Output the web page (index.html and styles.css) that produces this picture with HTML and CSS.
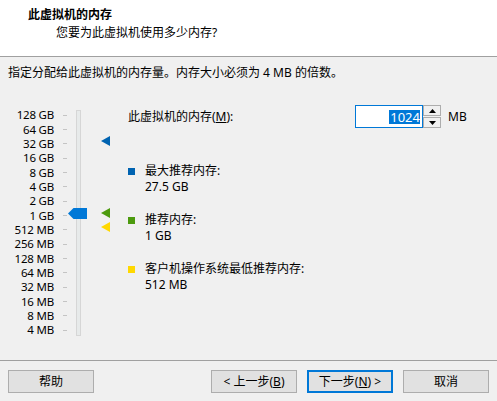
FILE: index.html
```html
<!DOCTYPE html>
<html lang="zh">
<head>
<meta charset="utf-8">
<title>此虚拟机的内存</title>
<link rel="stylesheet" href="styles.css">
</head>
<body>
<div class="page">
  <div class="header">
    <div class="title">此虚拟机的内存</div>
    <div class="subtitle">您要为此虚拟机使用多少内存?</div>
  </div>
  <div class="intro">指定分配给此虚拟机的内存量。内存大小必须为 4 MB 的倍数。</div>
  <div class="main">
    <div class="slider">
      <div class="scale">
        <div class="row"><span class="lab">128 GB</span><span class="tick"></span></div>
        <div class="row"><span class="lab">64 GB</span><span class="tick"></span></div>
        <div class="row"><span class="lab">32 GB</span><span class="tick"></span></div>
        <div class="row"><span class="lab">16 GB</span><span class="tick"></span></div>
        <div class="row"><span class="lab">8 GB</span><span class="tick"></span></div>
        <div class="row"><span class="lab">4 GB</span><span class="tick"></span></div>
        <div class="row"><span class="lab">2 GB</span><span class="tick"></span></div>
        <div class="row"><span class="lab">1 GB</span><span class="tick"></span></div>
        <div class="row"><span class="lab">512 MB</span><span class="tick"></span></div>
        <div class="row"><span class="lab">256 MB</span><span class="tick"></span></div>
        <div class="row"><span class="lab">128 MB</span><span class="tick"></span></div>
        <div class="row"><span class="lab">64 MB</span><span class="tick"></span></div>
        <div class="row"><span class="lab">32 MB</span><span class="tick"></span></div>
        <div class="row"><span class="lab">16 MB</span><span class="tick"></span></div>
        <div class="row"><span class="lab">8 MB</span><span class="tick"></span></div>
        <div class="row"><span class="lab">4 MB</span><span class="tick"></span></div>
      </div>
      <div class="track"></div>
      <svg class="thumb" style="top:102.5px" width="19" height="11" viewBox="0 0 19 11"><polygon points="0,5.5 5.5,0 19,0 19,11 5.5,11" fill="#0078d7"/></svg>
      <svg class="mark" style="top:31px" width="9" height="10" viewBox="0 0 9 10"><polygon points="0,5 9,0 9,10" fill="#0063b1"/></svg>
      <svg class="mark" style="top:102.5px" width="9" height="10" viewBox="0 0 9 10"><polygon points="0,5 9,0 9,10" fill="#4c9a0e"/></svg>
      <svg class="mark" style="top:117px" width="9" height="10" viewBox="0 0 9 10"><polygon points="0,5 9,0 9,10" fill="#ffd800"/></svg>
    </div>
    <div class="right">
      <div class="mem-row">
        <span class="mem-label">此虚拟机的内存(<u>M</u>):</span>
        <div class="input"><span class="sel">1024</span></div>
        <div class="spin">
          <div class="spin-btn"><svg width="7" height="4" viewBox="0 0 7 4"><polygon points="0,4 3.5,0 7,4" fill="#000"/></svg></div>
          <div class="spin-btn"><svg width="7" height="4" viewBox="0 0 7 4"><polygon points="0,0 7,0 3.5,4" fill="#000"/></svg></div>
        </div>
        <span class="unit">MB</span>
      </div>
      <div class="info first">
        <span class="sq blue"></span>
        <div class="info-text"><div>最大推荐内存:</div><div>27.5 GB</div></div>
      </div>
      <div class="info">
        <span class="sq green"></span>
        <div class="info-text"><div>推荐内存:</div><div>1 GB</div></div>
      </div>
      <div class="info">
        <span class="sq yellow"></span>
        <div class="info-text"><div>客户机操作系统最低推荐内存:</div><div>512 MB</div></div>
      </div>
    </div>
  </div>
  <div class="footer">
    <button class="btn">帮助</button>
    <div class="spacer"></div>
    <button class="btn">&lt; 上一步(<u>B</u>)</button>
    <button class="btn default">下一步(<u>N</u>) &gt;</button>
    <button class="btn">取消</button>
  </div>
</div>
</body>
</html>
```

FILE: styles.css
```css
* { box-sizing: border-box; }
html, body { margin: 0; padding: 0; }
body {
  background: #f0f0f0;
  font-family: "Noto Sans", "Noto Sans CJK SC", sans-serif;
  font-size: 12px;
  color: #000;
}
.page {
  width: 497px;
  height: 401px;
  display: flex;
  flex-direction: column;
  overflow: hidden;
}
.header {
  background: #fff;
  height: 57px;
  border-bottom: 1px solid #a0a0a0;
  padding-top: 7px;
}
.title {
  font-weight: bold;
  padding-left: 28px;
  line-height: 16px;
  height: 16px;
}
.subtitle {
  padding-left: 56px;
  line-height: 16px;
  margin-top: 2px;
}
.intro {
  padding: 8px 8px 0;
  line-height: 16px;
}
.main {
  display: flex;
  margin-top: 24px;
}
.slider {
  position: relative;
  display: flex;
  width: 81px;
  padding-top: 3px;
}
.scale {
  display: flex;
  flex-direction: column;
}
.row {
  display: flex;
  align-items: center;
  height: 14.35px;
  line-height: 14px;
}
.lab {
  width: 55px;
  text-align: right;
  padding-right: 1px;
  font-size: 11.5px;
  letter-spacing: -0.2px;
}
.tick {
  width: 4px;
  height: 1px;
  background: #c4c4c4;
  margin-left: 8px;
}
.track {
  width: 5px;
  height: 226px;
  margin-left: 9px;
  margin-top: 2px;
  border: 1px solid #d6d6d6;
  background: #e7eaea;
}
.thumb {
  position: absolute;
  left: 68px;
}
.mark {
  position: absolute;
  left: 101px;
}
.right {
  margin-left: 47px;
  display: flex;
  flex-direction: column;
}
.mem-row {
  display: flex;
  align-items: center;
  height: 23px;
}
.mem-label {
  width: 227px;
  line-height: 16px;
}
.input {
  width: 68px;
  height: 23px;
  border: 1px solid #0078d7;
  background: #fff;
  display: flex;
  align-items: center;
  justify-content: flex-end;
  padding-right: 2px;
}
.sel {
  background: #0078d7;
  color: #fff;
  line-height: 14px;
  padding: 0 0 0 1px;
  font-size: 13px;
}
.spin {
  width: 18px;
  height: 23px;
  display: flex;
  flex-direction: column;
  gap: 1px;
}
.spin-btn {
  flex: 1;
  border: 1px solid #adadad;
  background: #f0f0f0;
  display: flex;
  align-items: center;
  justify-content: center;
}
.spin-btn svg { display: block; }
.unit {
  margin-left: 7px;
  line-height: 16px;
}
.info {
  display: flex;
  align-items: flex-start;
  margin-top: 17px;
}
.info.first { margin-top: 35px; }
.sq {
  width: 7px;
  height: 7px;
  margin-top: 4.5px;
  margin-right: 10px;
  flex: none;
}
.sq.blue { background: #0063b1; }
.sq.green { background: #4c9a0e; }
.sq.yellow { background: #ffd800; }
.info-text { line-height: 16px; }
.footer {
  margin-top: auto;
  border-top: 1px solid #a0a0a0;
  height: 41px;
  display: flex;
  align-items: flex-start;
  padding: 9px 8px 0;
  gap: 10px;
}
.spacer { flex: 1; }
.btn {
  width: 86px;
  height: 23px;
  background: #e1e1e1;
  border: 1px solid #adadad;
  font-family: "Noto Sans", "Noto Sans CJK SC", sans-serif;
  font-size: 12px;
  color: #000;
  padding: 0;
  line-height: 16px;
}
.btn.default {
  border: 2px solid #0078d7;
}
```
